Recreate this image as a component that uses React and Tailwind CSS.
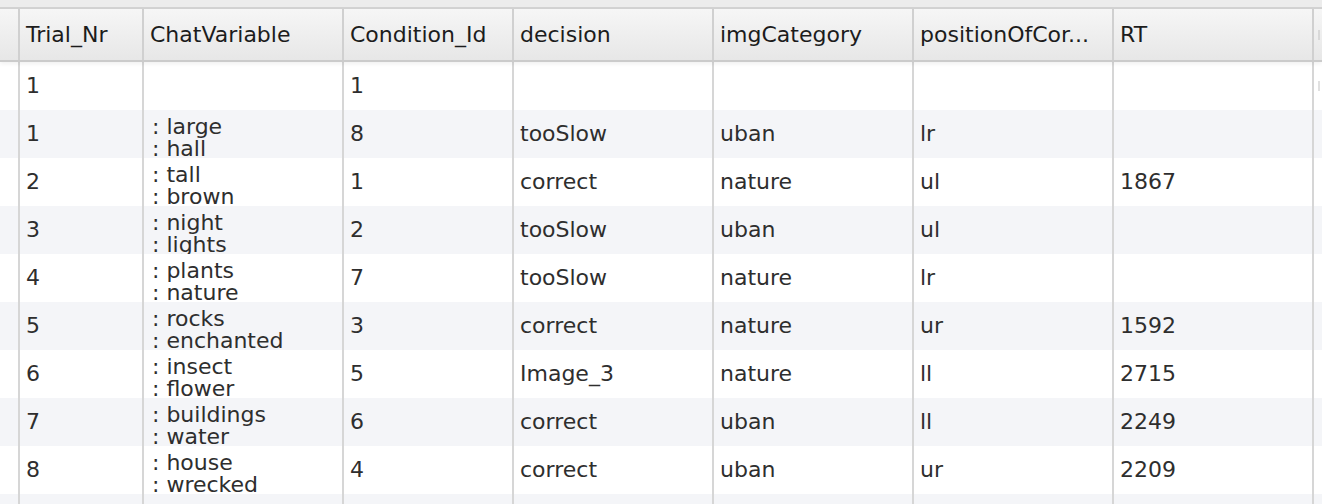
import React from "react";

const cols = [
  { key: "nr", label: "Trial_Nr", w: "w-[124px]" },
  { key: "chat", label: "ChatVariable", w: "w-[200px]" },
  { key: "cond", label: "Condition_Id", w: "w-[170px]" },
  { key: "dec", label: "decision", w: "w-[200px]" },
  { key: "cat", label: "imgCategory", w: "w-[200px]" },
  { key: "pos", label: "positionOfCor...", w: "w-[200px]" },
  { key: "rt", label: "RT", w: "w-[200px]" },
];

const rows = [
  { nr: "1", chat: "", cond: "1", dec: "", cat: "", pos: "", rt: "" },
  { nr: "1", chat: ": large\n: hall", cond: "8", dec: "tooSlow", cat: "uban", pos: "lr", rt: "" },
  { nr: "2", chat: ": tall\n: brown", cond: "1", dec: "correct", cat: "nature", pos: "ul", rt: "1867" },
  { nr: "3", chat: ": night\n: lights", cond: "2", dec: "tooSlow", cat: "uban", pos: "ul", rt: "" },
  { nr: "4", chat: ": plants\n: nature", cond: "7", dec: "tooSlow", cat: "nature", pos: "lr", rt: "" },
  { nr: "5", chat: ": rocks\n: enchanted", cond: "3", dec: "correct", cat: "nature", pos: "ur", rt: "1592" },
  { nr: "6", chat: ": insect\n: flower", cond: "5", dec: "Image_3", cat: "nature", pos: "ll", rt: "2715" },
  { nr: "7", chat: ": buildings\n: water", cond: "6", dec: "correct", cat: "uban", pos: "ll", rt: "2249" },
  { nr: "8", chat: ": house\n: wrecked", cond: "4", dec: "correct", cat: "uban", pos: "ur", rt: "2209" },
  { nr: "", chat: "", cond: "", dec: "", cat: "", pos: "", rt: "" },
];

export default function App() {
  return (
    <div className="w-[1322px] h-[504px] overflow-hidden bg-white font-['DejaVu_Sans','Verdana',sans-serif] text-[22px] leading-[22px]">
      <div className="h-[9px] bg-[#ececec] border-b-2 border-[#d2d2d2]" />
      <div className="flex h-[53px] bg-gradient-to-b from-[#f6f6f6] to-[#e7e7e7] border-b-2 border-[#cbcbcb] text-[#1c1c1c] relative z-10 shadow-[0_2px_4px_rgba(0,0,0,0.06)]">
        <div className="w-[20px] shrink-0 border-r-2 border-[#d0d0d0]" />
        {cols.map((c) => (
          <div key={c.key} className={`${c.w} shrink-0 border-r-2 border-[#d0d0d0] flex items-center pl-[6px] whitespace-nowrap overflow-hidden`}>
            {c.label}
          </div>
        ))}
        <div className="flex-1 flex items-center pl-[4px]">
          <div className="w-[2px] h-[10px] bg-[#d8d8d8]" />
        </div>
      </div>
      {rows.map((r, i) => (
        <div key={i} className={`flex h-[48px] text-[#2e2e2e] ${i % 2 === 1 ? "bg-[#f4f5f8]" : "bg-white"}`}>
          <div className="w-[20px] shrink-0 border-r-2 border-[#d6d6d6]" />
          {cols.map((c) =>
            c.key === "chat" ? (
              <div key={c.key} className={`${c.w} shrink-0 border-r-2 border-[#d6d6d6] pl-[8px] pt-[6px] whitespace-pre overflow-hidden leading-[22px]`}>
                {r[c.key]}
              </div>
            ) : (
              <div key={c.key} className={`${c.w} shrink-0 border-r-2 border-[#d6d6d6] flex items-center pl-[6px] whitespace-nowrap overflow-hidden`}>
                {r[c.key]}
              </div>
            )
          )}
          <div className="flex-1 flex items-center pl-[4px]">
            {i === 0 && <div className="w-[2px] h-[10px] bg-[#e0e0e0]" />}
          </div>
        </div>
      ))}
    </div>
  );
}
